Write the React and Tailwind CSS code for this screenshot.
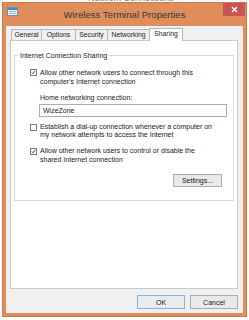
import React from "react";

const Check = () => (
  <svg width="7" height="7" viewBox="0 0 7 7" className="block">
    <path d="M1.3 3.6 L2.8 5.2 L5.8 1.4" fill="none" stroke="#1a1a1a" strokeWidth="1.2" />
  </svg>
);

const Box = ({ checked }) => (
  <div className="w-[7px] h-[7px] border border-[#7a7a7a] bg-white shrink-0 mt-[1px] flex items-center justify-center">
    {checked ? <Check /> : null}
  </div>
);

const Tab = ({ label, w }) => (
  <div
    className={`h-[11px] ${w} border border-b-0 border-[#b9b9b9] bg-[#f0f0f0] -ml-px first:ml-0 flex items-center justify-center text-[6.8px] leading-none text-[#222] whitespace-nowrap`}
  >
    {label}
  </div>
);

export default function App() {
  return (
    <div
      className="w-[249px] h-[320px] bg-white overflow-hidden"
      style={{ fontFamily: '"Liberation Sans", Arial, sans-serif' }}
    >
      <div className="h-[2px] overflow-hidden">
        <div className="text-[9px] leading-[9px] text-[#777] -mt-[6px] pl-[88px]">Network Connections</div>
      </div>
      <div className="mx-[2px] h-[315px] bg-[#df8d5b] border border-[#cd7c4b] flex flex-col">
        <div className="h-[23px] grid grid-cols-[1fr_auto_1fr] items-start">
          <div className="pl-[4px] pt-[4px]">
            <svg width="11" height="9" viewBox="0 0 11 9" className="block">
              <rect x="0.5" y="0.5" width="10" height="8" fill="#eef3f8" stroke="#6c8fb3" />
              <rect x="1" y="1" width="9" height="2" fill="#4a86c5" />
              <rect x="2" y="4" width="7" height="1" fill="#9db3c9" />
              <rect x="2" y="6" width="7" height="1" fill="#9db3c9" />
            </svg>
          </div>
          <div className="pt-[6px] text-[9.6px] leading-[11px] text-[#3a3a3a] whitespace-nowrap">
            Wireless Terminal Properties
          </div>
          <div className="flex justify-end pr-[1px]">
            <div className="w-[22px] h-[13px] bg-[#c85352] flex items-center justify-center">
              <svg width="7" height="7" viewBox="0 0 7 7" className="block">
                <path d="M1 1 L6 6 M6 1 L1 6" stroke="#fff" strokeWidth="1.6" />
              </svg>
            </div>
          </div>
        </div>
        <div className="ml-[3px] mr-[3px] h-[287px] bg-[#f0f0f0] flex flex-col pt-[1px] pl-[4px] pr-[5px]">
          <div className="h-[13px] flex items-end pl-[1px]">
            <Tab label="General" w="w-[31px]" />
            <Tab label="Options" w="w-[35px]" />
            <Tab label="Security" w="w-[33px]" />
            <Tab label="Networking" w="w-[43px]" />
            <div className="h-[13px] w-[34px] -ml-[1px] border border-b-0 border-[#b9b9b9] bg-white relative z-10 -mb-px pb-px flex items-center justify-center text-[6.8px] leading-none text-[#222]">
              Sharing
            </div>
          </div>
          <div className="h-[249px] bg-white border border-[#c9c9c9] pt-[10px] px-[3px]">
            <fieldset className="border border-[#dcdcdc] pl-[15px] pb-[13px] flex flex-col">
              <legend className="-ml-[11px] px-[1px] text-[7px] leading-[9px] text-[#222] whitespace-nowrap">
                Internet Connection Sharing
              </legend>
              <div className="flex gap-[3px] mt-[8px] items-start">
                <Box checked />
                <div className="text-[7px] leading-[9px] text-[#222] -mt-[0.5px] whitespace-nowrap">
                  Allow other network users to connect through this
                  <br />
                  computer's Internet connection
                </div>
              </div>
              <div className="ml-[10px] mt-[7px] text-[7px] leading-[9px] text-[#222]">
                Home networking connection:
              </div>
              <div className="ml-[9px] mt-[2.5px] w-[188px] h-[13px] border border-[#adadad] bg-white flex items-center pl-[3px] text-[7px] leading-none text-[#222]">
                WizeZone
              </div>
              <div className="flex gap-[3px] mt-[5.5px] items-start">
                <Box />
                <div className="text-[7px] leading-[8.5px] text-[#222] whitespace-nowrap">
                  Establish a dial-up connection whenever a computer on
                  <br />
                  my network attempts to access the Internet
                </div>
              </div>
              <div className="flex gap-[3px] mt-[7px] items-start">
                <Box checked />
                <div className="text-[7px] leading-[9px] text-[#222] -mt-[0.5px] whitespace-nowrap">
                  Allow other network users to control or disable the
                  <br />
                  shared Internet connection
                </div>
              </div>
              <div className="self-end mr-[11px] mt-[9.5px] w-[49px] h-[13px] border border-[#adadad] bg-[#e9e9e9] flex items-center justify-center text-[7px] leading-none text-[#222]">
                Settings...
              </div>
            </fieldset>
          </div>
          <div className="flex justify-end gap-[5px] mt-[6px]">
            <div className="w-[48px] h-[14px] border border-[#7eb4ea] bg-[#ebebeb] flex items-center justify-center text-[7px] leading-none text-[#222]">
              OK
            </div>
            <div className="w-[48px] h-[14px] border border-[#adadad] bg-[#e9e9e9] flex items-center justify-center text-[7px] leading-none text-[#222]">
              Cancel
            </div>
          </div>
        </div>
      </div>
    </div>
  );
}
